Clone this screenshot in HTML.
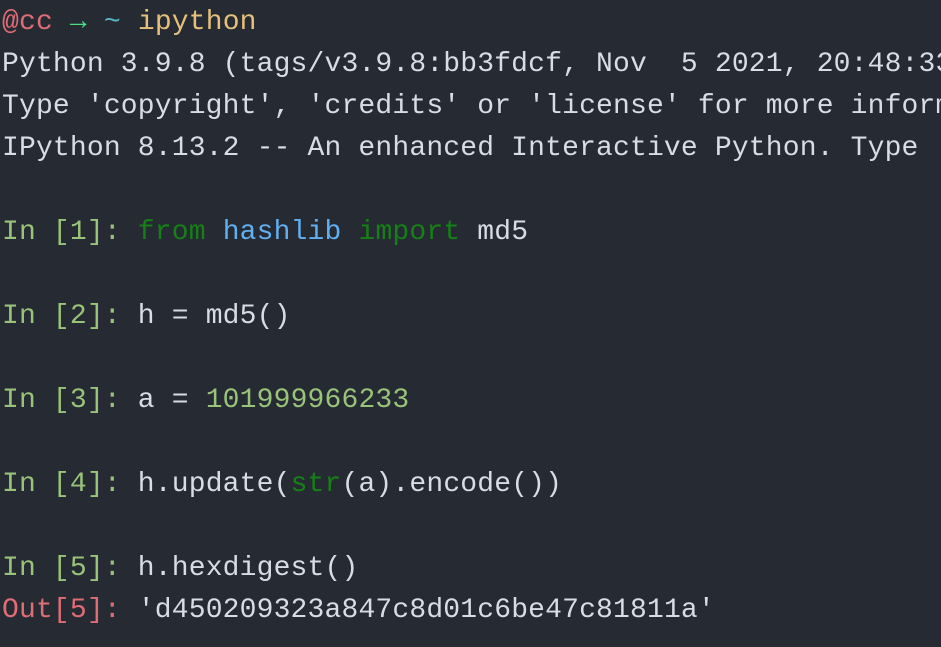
<!DOCTYPE html>
<html><head><style>
html,body{margin:0;padding:0;background:#262a33;width:941px;height:647px;overflow:hidden}
pre{margin:0;padding:2px 0 0 2px;font-family:"Liberation Mono",monospace;font-size:28px;letter-spacing:0.17px;line-height:42px;color:#d8dce4;white-space:pre}
.r{color:#e06c75}.g{color:#98c379}.k{color:#168016}.b{color:#61afef}.y{color:#e5c07b}.a{color:#4ade80}.c{color:#56b6c2}.n{color:#98c379}
</style></head><body><pre><span class="r">@cc</span> <span class="a">→</span> <span class="c">~</span> <span class="y">ipython</span>
Python 3.9.8 (tags/v3.9.8:bb3fdcf, Nov  5 2021, 20:48:33
Type 'copyright', 'credits' or 'license' for more inform
IPython 8.13.2 -- An enhanced Interactive Python. Type

<span class="g">In [1]: </span><span class="k">from</span> <span class="b">hashlib</span> <span class="k">import</span> md5

<span class="g">In [2]: </span>h = md5()

<span class="g">In [3]: </span>a = <span class="n">101999966233</span>

<span class="g">In [4]: </span>h.update(<span class="k">str</span>(a).encode())

<span class="g">In [5]: </span>h.hexdigest()
<span class="r">Out[5]: </span>'d450209323a847c8d01c6be47c81811a'
</pre></body></html>
